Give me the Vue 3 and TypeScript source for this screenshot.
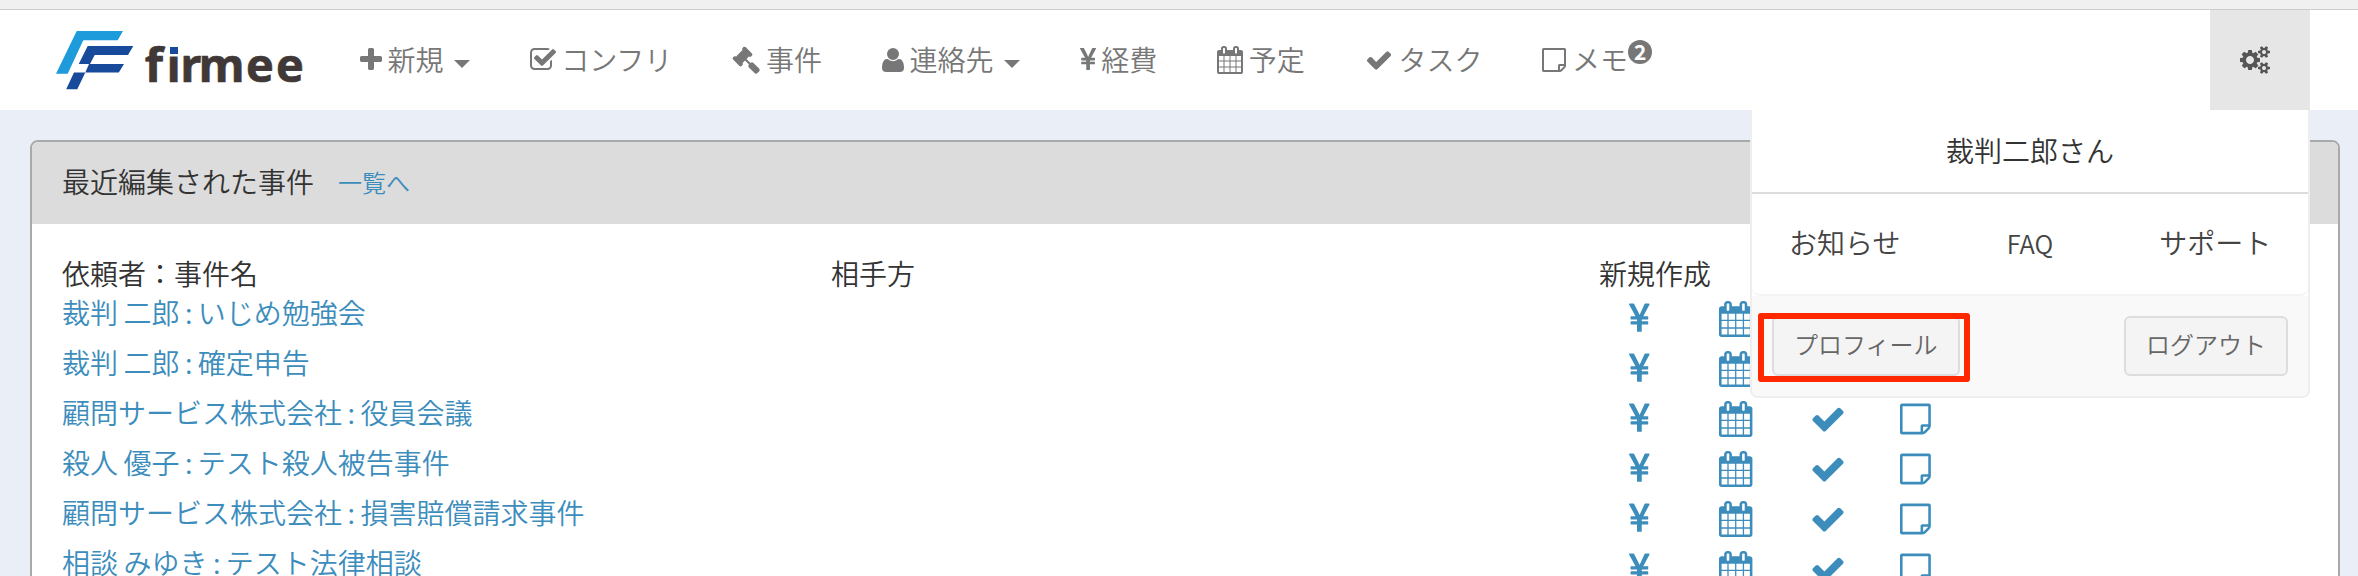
<script setup lang="ts">
interface Glyph {
  box: string
  d: string
}
interface NavItem {
  label: string
  icon: string
  caret?: boolean
  badge?: number
}

const glyphs: Record<string, Glyph> = {
  plus: {
    box: '192 0 1408 1792',
    d: 'M1600 736v192q0 40-28 68t-68 28h-416v416q0 40-28 68t-68 28h-192q-40 0-68-28t-28-68v-416h-416q-40 0-68-28t-28-68v-192q0-40 28-68t68-28h416v-416q0-40 28-68t68-28h192q40 0 68 28t28 68v416h416q40 0 68 28t28 68z',
  },
  checkSquare: {
    box: '64 0 1664 1792',
    d: 'M1472 930v318q0 119-84.5 203.5t-203.5 84.5h-832q-119 0-203.5-84.5t-84.5-203.5v-832q0-119 84.5-203.5t203.5-84.5h832q63 0 117 25 15 7 18 23 3 17-9 29l-49 49q-10 10-23 10-3 0-9-2-23-6-45-6h-832q-66 0-113 47t-47 113v832q0 66 47 113t113 47h832q66 0 113-47t47-113v-254q0-13 9-22l64-64q10-10 23-10 6 0 12 3 20 8 20 29zm231-489l-814 814q-24 24-57 24t-57-24l-430-430q-24-24-24-57t24-57l110-110q24-24 57-24t57 24l263 263 647-647q24-24 57-24t57 24l110 110q24 24 24 57t-24 57z',
  },
  gavel: {
    box: '0 0 1792 1792',
    d: 'M1771 1536q0 53-37 90l-107 108q-39 37-91 37-53 0-90-37l-363-364q-38-36-38-90 0-53 43-96l-256-256-126 126q-14 14-34 14t-34-14q2 2 12.5 12t12.5 13 10 11.5 10 13.5 6 13.5 5.5 16.5 1.5 18q0 38-28 68-3 3-16.5 18t-19 20.5-18.5 16.5-22 15.5-22 9-26 4.5q-40 0-68-28l-408-408q-28-28-28-68 0-13 4.5-26t9-22 15.5-22 16.5-18.5 20.5-19 18-16.5q30-28 68-28 10 0 18 1.5t16.5 5.5 13.5 6 13.5 10 11.5 10 13 12.5 12 12.5q-14-14-14-34t14-34l348-348q14-14 34-14t34 14q-2-2-12.5-12t-12.5-13-10-11.5-10-13.5-6-13.5-5.5-16.5-1.5-18q0-38 28-68 3-3 16.5-18t19-20.5 18.5-16.5 22-15.5 22-9 26-4.5q40 0 68 28l408 408q28 28 28 68 0 13-4.5 26t-9 22-15.5 22-16.5 18.5-20.5 19-18 16.5q-30 28-68 28-10 0-18-1.5t-16.5-5.5-13.5-6-13.5-10-11.5-10-13-12.5-12-12.5q14 14 14 34t-14 34l-126 126 256 256q43-43 96-43 52 0 91 37l363 363q37 39 37 91z',
  },
  user: {
    box: '192 0 1408 1792',
    d: 'M1600 1405q0 120-73 189.5t-194 69.5h-874q-121 0-194-69.5t-73-189.5q0-53 3.5-103.5t14-109 26.5-108.5 43-97.5 62-81 85.5-53.5 111.5-20q9 0 42 21.5t74.5 48 108 48 133.5 21.5 133.5-21.5 108-48 74.5-48 42-21.5q61 0 111.5 20t85.5 53.5 62 81 43 97.5 26.5 108.5 14 109 3.5 103.5zm-320-893q0 159-112.5 271.5t-271.5 112.5-271.5-112.5-112.5-271.5 112.5-271.5 271.5-112.5 271.5 112.5 112.5 271.5z',
  },
  yen: {
    box: '382.5 0 1027 1792',
    d: 'M985.5 1536h-172q-13 0-22.5-9t-9.5-23v-330h-288q-13 0-22.5-9t-9.5-23v-103q0-13 9.5-22.5t22.5-9.5h288v-85h-288q-13 0-22.5-9t-9.5-23v-104q0-13 9.5-22.5t22.5-9.5h214l-321-578q-8-16 0-32 10-16 28-16h194q19 0 29 18l215 425q19 38 56 125 10-24 30.5-68t27.5-61l191-420q8-19 29-19h191q17 0 27 16 9 14 1 31l-313 579h215q13 0 22.5 9.5t9.5 22.5v104q0 14-9.5 23t-22.5 9h-290v85h290q13 0 22.5 9.5t9.5 22.5v103q0 14-9.5 23t-22.5 9h-290v330q0 13-9.5 22.5t-22.5 9.5z',
  },
  calendar: {
    box: '64 0 1664 1792',
    d: 'M192 1664h288v-288h-288v288zm352 0h320v-288h-320v288zm-352-352h288v-320h-288v320zm352 0h320v-320h-320v320zm-352-384h288v-288h-288v288zm736 736h320v-288h-320v288zm-384-736h320v-288h-320v288zm768 736h288v-288h-288v288zm-384-352h320v-320h-320v320zm-352-864v-288q0-13-9.5-22.5t-22.5-9.5h-64q-13 0-22.5 9.5t-9.5 22.5v288q0 13 9.5 22.5t22.5 9.5h64q13 0 22.5-9.5t9.5-22.5zm736 864h288v-320h-288v320zm-384-384h320v-288h-320v288zm384 0h288v-288h-288v288zm32-480v-288q0-13-9.5-22.5t-22.5-9.5h-64q-13 0-22.5 9.5t-9.5 22.5v288q0 13 9.5 22.5t22.5 9.5h64q13 0 22.5-9.5t9.5-22.5zm384-64v1280q0 52-38 90t-90 38h-1408q-52 0-90-38t-38-90v-1280q0-52 38-90t90-38h128v-96q0-66 47-113t113-47h64q66 0 113 47t47 113v96h384v-96q0-66 47-113t113-47h64q66 0 113 47t47 113v96h128q52 0 90 38t38 90z',
  },
  check: {
    box: '0 0 1792 1792',
    d: 'M1671 566q0 40-28 68l-724 724-136 136q-28 28-68 28t-68-28l-136-136-362-362q-28-28-28-68t28-68l136-136q28-28 68-28t68 28l294 295 656-657q28-28 68-28t68 28l136 136q28 28 28 68z',
  },
  note: {
    box: '128 0 1536 1792',
    d: 'M1528 1280h-248v248q29-10 41-22l185-185q12-12 22-41zm-280-128h288v-896h-1280v1280h896v-288q0-40 28-68t68-28zm416-928v1024q0 40-20 88t-48 76l-184 184q-28 28-76 48t-88 20h-1024q-40 0-68-28t-28-68v-1344q0-40 28-68t68-28h1344q40 0 68 28t28 68z',
  },
  cogs: {
    box: '-64 0 1920 1792',
    d: 'M832 896q0-106-75-181t-181-75-181 75-75 181 75 181 181 75 181-75 75-181zm768 512q0-52-38-90t-90-38-90 38-38 90q0 53 37.5 90.5t90.5 37.5 90.5-37.5 37.5-90.5zm0-1024q0-52-38-90t-90-38-90 38-38 90q0 53 37.5 90.5t90.5 37.5 90.5-37.5 37.5-90.5zm-384 421v185q0 10-7 19.5t-16 10.5l-155 24q-11 35-32 76 34 48 90 115 7 11 7 20 0 12-7 19-23 30-82.5 89.5t-78.5 59.5q-11 0-21-7l-115-90q-37 19-77 31-11 108-23 155-7 24-30 24h-186q-11 0-20-7.5t-10-17.5l-23-153q-34-10-75-31l-118 89q-7 7-20 7-11 0-21-8-144-133-144-160 0-9 7-19 10-14 41-53t47-61q-23-44-35-82l-152-24q-10-1-17-9.5t-7-19.5v-185q0-10 7-19.5t16-10.5l155-24q11-35 32-76-34-48-90-115-7-11-7-20 0-12 7-20 22-30 82-89t79-59q11 0 21 7l115 90q34-18 77-32 11-108 23-154 7-24 30-24h186q11 0 20 7.5t10 17.5l23 153q34 10 75 31l118-89q8-7 20-7 11 0 21 8 144 133 144 160 0 8-7 19-12 16-42 54t-45 60q23 48 34 82l152 23q10 2 17 10.5t7 19.5zm640 533v140q0 16-149 31-12 27-30 52 51 113 51 138 0 4-4 7-122 71-124 71-8 0-46-47t-52-68q-20 2-30 2t-30-2q-14 21-52 68t-46 47q-2 0-124-71-4-3-4-7 0-25 51-138-18-25-30-52-149-15-149-31v-140q0-16 149-31 13-29 30-52-51-113-51-138 0-4 4-7 4-2 35-20t59-34 30-16q8 0 46 46.5t52 67.5q20-2 30-2t30 2q51-71 92-112l6-2q4 0 124 70 4 3 4 7 0 25-51 138 17 23 30 52 149 15 149 31zm0-1024v140q0 16-149 31-12 27-30 52 51 113 51 138 0 4-4 7-122 71-124 71-8 0-46-47t-52-68q-20 2-30 2t-30-2q-14 21-52 68t-46 47q-2 0-124-71-4-3-4-7 0-25 51-138-18-25-30-52-149-15-149-31v-140q0-16 149-31 13-29 30-52-51-113-51-138 0-4 4-7 4-2 35-20t59-34 30-16q8 0 46 46.5t52 67.5q20-2 30-2t30 2q51-71 92-112l6-2q4 0 124 70 4 3 4 7 0 25-51 138 17 23 30 52 149 15 149 31z',
  },
}

const navItems: NavItem[] = [
  { label: '新規', icon: 'plus', caret: true },
  { label: 'コンフリ', icon: 'checkSquare' },
  { label: '事件', icon: 'gavel' },
  { label: '連絡先', icon: 'user', caret: true },
  { label: '経費', icon: 'yen' },
  { label: '予定', icon: 'calendar' },
  { label: 'タスク', icon: 'check' },
  { label: 'メモ', icon: 'note', badge: 2 },
]

const cases: string[] = [
  '裁判 二郎 : いじめ勉強会',
  '裁判 二郎 : 確定申告',
  '顧問サービス株式会社 : 役員会議',
  '殺人 優子 : テスト殺人被告事件',
  '顧問サービス株式会社 : 損害賠償請求事件',
  '相談 みゆき : テスト法律相談',
]

const actions: string[] = ['yen', 'calendar', 'check', 'note']
</script>

<template>
  <div class="page">
    <div class="strip"></div>
    <header class="navbar">
      <a class="brand">
        <svg class="logo" viewBox="0 0 270 90">
          <path fill="#1e9bdb" d="M36.700 16H83l-5.300 9.300H43.300L27.700 58.700H16z" />
          <path
            fill="#184a9b"
            d="M47.700 31H93.300L88 40H54.700L50 49H84l-5.200 8.400H45.300L37.300 74.300H26.200L34 57.400H45.300L49 49H38.700z"
          />
          <text class="wordmark" x="104.700 126.500 140.300 158.400 206 236" y="66.500">firmee</text>
          <path fill="#fff" d="M128.500 27h11v14.500h-11z" />
          <path fill="#184a9b" d="M130 32h8v7h-8z" />
        </svg>
      </a>
      <nav class="menu">
        <a v-for="item in navItems" :key="item.label" class="item">
          <svg class="icon" :viewBox="glyphs[item.icon].box"><path :d="glyphs[item.icon].d" /></svg>
          <span>{{ item.label }}</span>
          <i v-if="item.caret" class="caret"></i>
          <b v-if="item.badge" class="badge">{{ item.badge }}</b>
        </a>
      </nav>
      <div class="settings">
        <svg class="icon" :viewBox="glyphs.cogs.box"><path :d="glyphs.cogs.d" /></svg>
        <div class="dropdown">
          <div class="who">裁判二郎さん</div>
          <div class="links">
            <a>お知らせ</a>
            <a class="latin">FAQ</a>
            <a>サポート</a>
          </div>
          <div class="foot">
            <a class="btn">プロフィール</a>
            <a class="btn">ログアウト</a>
            <div class="marker"></div>
          </div>
        </div>
      </div>
    </header>

    <section class="panel">
      <div class="panel-head">
        <span>最近編集された事件</span>
        <a class="all">一覧へ</a>
      </div>
      <div class="table">
        <div class="row head">
          <span>依頼者：事件名</span>
          <span>相手方</span>
          <span>新規作成</span>
        </div>
        <div v-for="name in cases" :key="name" class="row">
          <a class="case">{{ name }}</a>
          <span></span>
          <div class="actions">
            <svg v-for="a in actions" :key="a" class="icon" :viewBox="glyphs[a].box"><path :d="glyphs[a].d" /></svg>
          </div>
        </div>
      </div>
    </section>
  </div>
</template>

<style>
body {
  margin: 0;
  overflow: hidden;
}
</style>

<style scoped>
.page {
  display: flex;
  flex-direction: column;
  height: 576px;
  overflow: hidden;
  box-sizing: border-box;
  background: #eaeef6;
  color: #333;
  font-family: 'Noto Sans CJK JP', sans-serif;
  font-size: 28px;
  font-weight: 350;
  line-height: 40px;
}
.strip {
  flex: none;
  height: 9px;
  background: #f0f0f0;
  border-bottom: 1px solid #ccc;
}
.navbar {
  flex: none;
  display: flex;
  height: 100px;
  padding-right: 48px;
  background: #fff;
  position: relative;
  z-index: 2;
}
.brand {
  width: 330px;
  padding: 5px 0 0 40px;
  box-sizing: border-box;
}
.logo {
  display: block;
  width: 270px;
  height: 90px;
}
.wordmark {
  font-family: 'Open Sans', sans-serif;
  font-size: 47px;
  font-weight: 700;
  font-variant-ligatures: none;
  fill: #403836;
  stroke: #403836;
  stroke-width: 0.7px;
}
.icon {
  display: block;
  flex: none;
  height: 28px;
  fill: currentColor;
}
.menu {
  display: flex;
  flex: 1;
  color: #777;
}
.item {
  display: flex;
  align-items: center;
  padding: 0 30px;
}
.item span {
  margin: 0 0 3px 5.6px;
}
.caret {
  margin: 8px 0 0 10px;
  border: 8px solid transparent;
  border-top-color: currentColor;
  border-bottom: 0;
}
.badge {
  width: 24px;
  height: 24px;
  margin-bottom: 16px;
  border-radius: 50%;
  background: #777;
  color: #fff;
  font-size: 21px;
  font-weight: 700;
  line-height: 23px;
  text-align: center;
}
.settings {
  position: relative;
  display: flex;
  align-items: center;
  width: 100px;
  padding-left: 30px;
  box-sizing: border-box;
  background: #e6e6e6;
  color: #555;
}
.dropdown {
  position: absolute;
  top: 100px;
  right: 0;
  width: 560px;
  height: 288px;
  box-sizing: border-box;
  border: 2px solid #eee;
  border-top: 0;
  border-radius: 0 0 8px 8px;
  background: #fff;
  color: #333;
}
.who {
  height: 84px;
  box-sizing: border-box;
  padding-top: 20px;
  border-bottom: 2px solid #ddd;
  text-align: center;
}
.links {
  display: grid;
  grid-template-columns: repeat(3, 1fr);
  height: 102px;
  box-sizing: border-box;
  padding-top: 28px;
  border-bottom: 2px solid #f4f4f4;
  border-radius: 0 0 8px 8px;
  color: #444;
  text-align: center;
}
.latin {
  padding-top: 1px;
  font-size: 25.4px;
}
.foot {
  position: relative;
  display: flex;
  justify-content: space-between;
  height: 100px;
  padding: 20px;
  box-sizing: border-box;
  background: #f9f9f9;
  border-radius: 0 0 6px 6px;
}
.btn {
  height: 60px;
  padding: 0 20px;
  box-sizing: border-box;
  border: 2px solid #ddd;
  border-radius: 6px;
  background: #f4f4f4;
  color: #666;
  font-size: 24px;
  line-height: 52px;
}
.marker {
  position: absolute;
  left: 6px;
  top: 17px;
  width: 212px;
  height: 69px;
  box-sizing: border-box;
  border: 6px solid #ff2800;
  border-radius: 3px;
}
.panel {
  flex: none;
  height: 480px;
  margin: 30px 18px 0 30px;
  border: 2px solid #a9a9a9;
  border-radius: 8px;
  background: #fff;
  box-sizing: border-box;
  overflow: hidden;
}
.panel-head {
  display: flex;
  align-items: center;
  height: 82px;
  padding: 0 0 5px 30px;
  box-sizing: border-box;
  background: #dcdcdc;
}
.all {
  margin: 3px 0 0 24px;
  color: #3c8dbc;
  font-size: 24px;
}
.table {
  padding: 29px 0 0 30px;
}
.row {
  display: grid;
  grid-template-columns: 769px 768px 1fr;
  height: 50px;
}
.head {
  height: 39px;
}
.case {
  color: #3c8dbc;
  word-spacing: -0.8px;
}
.actions {
  display: grid;
  grid-template-columns: 90px 90.4px 90.4px 31px;
  padding: 9px 0 0 30.4px;
  color: #3c8dbc;
}
.actions .icon {
  height: 36px;
}
</style>
